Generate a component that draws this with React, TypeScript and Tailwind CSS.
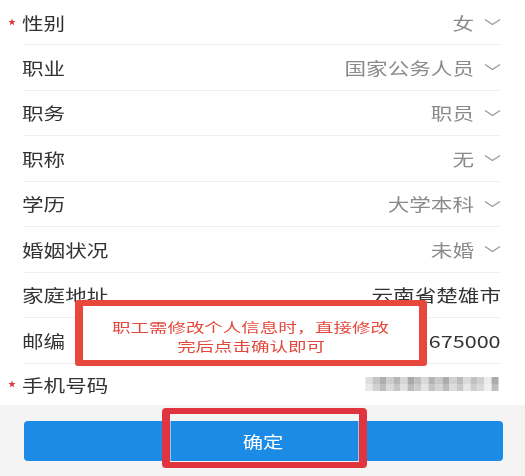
import React from 'react';

type Row = {
  label: string;
  value?: string;
  required?: boolean;
  select?: boolean;
  dark?: boolean;
  masked?: boolean;
};

const rows: Row[] = [
  { label: '性别', value: '女', required: true, select: true },
  { label: '职业', value: '国家公务人员', select: true },
  { label: '职务', value: '职员', select: true },
  { label: '职称', value: '无', select: true },
  { label: '学历', value: '大学本科', select: true },
  { label: '婚姻状况', value: '未婚', select: true },
  { label: '家庭地址', value: '云南省楚雄市', dark: true },
  { label: '邮编', value: '675000', dark: true },
  { label: '手机号码', required: true, masked: true },
];

// shades for the pixelated phone number
const mosaic = [
  ['#dedede', '#c4c4c4', '#aeaeae', '#cdcdcd', '#b6b6b6', '#d6d6d6', '#a9a9a9', '#bebebe', '#d9d9d9', '#b3b3b3', '#c8c8c8', '#acacac', '#d1d1d1', '#bbbbbb', '#dbdbdb', '#c1c1c1', '#cfcfcf', '#ececec', '#ababab'],
  ['#e8e8e8', '#d1d1d1', '#bebebe', '#dadada', '#c6c6c6', '#e0e0e0', '#bbbbbb', '#cbcbcb', '#e4e4e4', '#c4c4c4', '#d4d4d4', '#bcbcbc', '#dcdcdc', '#c9c9c9', '#e6e6e6', '#cecece', '#d9d9d9', '#f1f1f1', '#bdbdbd'],
];

function Star() {
  return (
    <svg width="8" height="8" viewBox="0 0 10 10">
      <polygon
        points="5,0.5 6.2,3.6 9.5,3.7 6.9,5.8 7.8,9.2 5,7.3 2.2,9.2 3.1,5.8 0.5,3.7 3.8,3.6"
        fill="#e03b3b"
      />
    </svg>
  );
}

function Chevron() {
  return (
    <svg width="17" height="8" viewBox="0 0 17 8" className="shrink-0">
      <polyline points="1,1.5 8.5,6.5 16,1.5" fill="none" stroke="#9a9a9a" strokeWidth="1.3" />
    </svg>
  );
}

function Masked() {
  return (
    <svg width="138" height="14" viewBox="0 0 133 14" className="blur-[0.6px]">
      {mosaic.map((line, r) =>
        line.map((c, i) => <rect key={`${r}-${i}`} x={i * 7} y={r * 7} width="7" height="7" fill={c} />)
      )}
    </svg>
  );
}

function FormRow({ row, h }: { row: Row; h: string }) {
  return (
    <div className={`flex items-center pl-[8px] pr-[24px] ${h}`}>
      <div className="w-[14px] flex items-center">{row.required && <Star />}</div>
      <span className="inline-block origin-left scale-x-[1.27] text-[17px] text-[#333]">{row.label}</span>
      <div className="flex-1 flex items-center justify-end gap-[10px]">
        {row.masked ? (
          <Masked />
        ) : (
          <span
            className={`inline-block origin-right scale-x-[1.27] text-[17px] ${
              row.dark ? 'text-[#333]' : 'text-[#8a8a8a]'
            }`}
          >
            {row.value}
          </span>
        )}
        {row.select && <Chevron />}
      </div>
    </div>
  );
}

export default function App() {
  return (
    <div className="relative w-[525px] h-[476px] overflow-hidden bg-white font-['Noto_Sans_CJK_SC',sans-serif] leading-none">
      <div className="flex flex-col">
        {rows.map((row, i) => (
          <React.Fragment key={row.label}>
            <FormRow
              row={row}
              h={i === 0 ? 'h-[44px]' : i === rows.length - 1 ? 'h-[41.5px]' : 'h-[44.5px]'}
            />
            {i < rows.length - 1 && <div className="ml-[24px] mr-[25px] h-px bg-[#efefef]" />}
          </React.Fragment>
        ))}
        <div className="h-[71px] bg-[#f4f4f4] pt-[16px] pl-[24px] pr-[22px]">
          <button className="w-full h-[40px] rounded-[4px] bg-[#1b8be6] flex items-center justify-center">
            <span className="inline-block scale-x-[1.27] text-[16px] text-white">确定</span>
          </button>
        </div>
      </div>

      {/* annotation: tip box */}
      <div className="absolute left-[75px] top-[300px] w-[352px] h-[66px] border-x-[8px] border-y-[6px] border-[#e8473b] rounded-[3px] bg-white pt-[12px] flex flex-col items-center text-[13px] leading-[18.5px] text-[#e2483b]">
        <span className="inline-block scale-x-[1.42]">职工需修改个人信息时，直接修改</span>
        <span className="inline-block scale-x-[1.42]">完后点击确认即可</span>
      </div>

      {/* annotation: confirm button box */}
      <div className="absolute left-[162px] top-[408px] w-[205px] h-[60px] border-x-[8px] border-y-[6px] border-[#e0353f] rounded-[4px] shadow-[inset_0_0_0_1px_rgba(255,255,255,0.5)]" />
    </div>
  );
}
